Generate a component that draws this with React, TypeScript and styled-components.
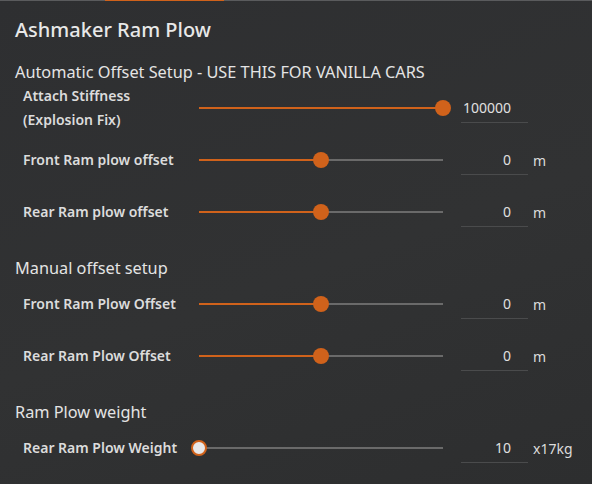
import React from "react";
import styled, { createGlobalStyle } from "styled-components";

const Global = createGlobalStyle`
  html, body { margin: 0; padding: 0; background: #2f3031; }
  body { font-family: "Noto Sans", "Open Sans", sans-serif; }
`;

const Panel = styled.div`
  width: 592px;
  height: 484px;
  box-sizing: border-box;
  background: linear-gradient(160deg, #2e2f31 0%, #313233 55%, #2d2e2f 100%);
  color: #e6e6e6;
  overflow: hidden;
`;

const TopBar = styled.div`
  display: flex;
  height: 1px;
  background: #5a5b5d;
`;

const TopAccent = styled.div`
  margin-left: 105px;
  width: 119px;
  background: #d0621b;
`;

const Title = styled.h1`
  margin: 15px 0 0 15px;
  font-size: 20px;
  line-height: 28px;
  font-weight: 500;
  color: #e8e8e8;
`;

const Section = styled.section<{ $top: number }>`
  display: flex;
  flex-direction: column;
  margin-top: ${(p) => p.$top}px;
`;

const SectionHeading = styled.h2`
  margin: 0 0 0 15px;
  font-size: 16.3px;
  line-height: 20px;
  font-weight: 400;
  color: #e4e4e4;
`;

const Row = styled.div`
  display: grid;
  grid-template-columns: 176px 244px 85px auto;
  align-items: center;
  height: 52px;
  padding-left: 23px;
`;

const Label = styled.div`
  font-size: 14px;
  line-height: 24px;
  font-weight: 600;
  color: #dcdcdc;
  white-space: nowrap;
`;

const Track = styled.div`
  position: relative;
  height: 2px;
  background: #6a6a6a;
`;

const Fill = styled.div`
  position: absolute;
  left: 0;
  top: 0;
  height: 2px;
  background: #d0621b;
`;

const Thumb = styled.div<{ $empty: boolean }>`
  position: absolute;
  top: 1px;
  width: 16px;
  height: 16px;
  box-sizing: border-box;
  border-radius: 50%;
  transform: translate(-50%, -50%);
  background: ${(p) => (p.$empty ? "#e8e8ea" : "#d0621b")};
  border: ${(p) => (p.$empty ? "2px solid #d0621b" : "none")};
`;

const ValueBox = styled.div`
  margin-left: 18px;
  width: 67px;
  height: 30px;
  box-sizing: border-box;
  display: flex;
  align-items: center;
  justify-content: flex-end;
  padding: 0 17px 0 2px;
  border-bottom: 1px solid #4a4b4c;
  font-size: 14px;
  color: #e0e0e0;
`;

const Unit = styled.div`
  margin-left: 5px;
  font-size: 14px;
  color: #dcdcdc;
`;

type SliderRow = {
  label: React.ReactNode;
  pct: number;
  value: string;
  unit?: string;
};

function ParamRow({ label, pct, value, unit }: SliderRow) {
  return (
    <Row>
      <Label>{label}</Label>
      <Track>
        <Fill style={{ width: `${pct}%` }} />
        <Thumb $empty={pct === 0} style={{ left: `${pct}%` }} />
      </Track>
      <ValueBox>{value}</ValueBox>
      <Unit>{unit}</Unit>
    </Row>
  );
}

export default function App() {
  return (
    <>
      <Global />
      <Panel>
        <TopBar>
          <TopAccent />
        </TopBar>
        <Title>Ashmaker Ram Plow</Title>
        <Section $top={18}>
          <SectionHeading>Automatic Offset Setup - USE THIS FOR VANILLA CARS</SectionHeading>
          <ParamRow
            label={
              <>
                Attach Stiffness
                <br />
                (Explosion Fix)
              </>
            }
            pct={100}
            value="100000"
          />
          <ParamRow label="Front Ram plow offset" pct={50} value="0" unit="m" />
          <ParamRow label="Rear Ram plow offset" pct={50} value="0" unit="m" />
        </Section>
        <Section $top={20}>
          <SectionHeading>Manual offset setup</SectionHeading>
          <ParamRow label="Front Ram Plow Offset" pct={50} value="0" unit="m" />
          <ParamRow label="Rear Ram Plow Offset" pct={50} value="0" unit="m" />
        </Section>
        <Section $top={20}>
          <SectionHeading>Ram Plow weight</SectionHeading>
          <ParamRow label="Rear Ram Plow Weight" pct={0} value="10" unit="x17kg" />
        </Section>
      </Panel>
    </>
  );
}
